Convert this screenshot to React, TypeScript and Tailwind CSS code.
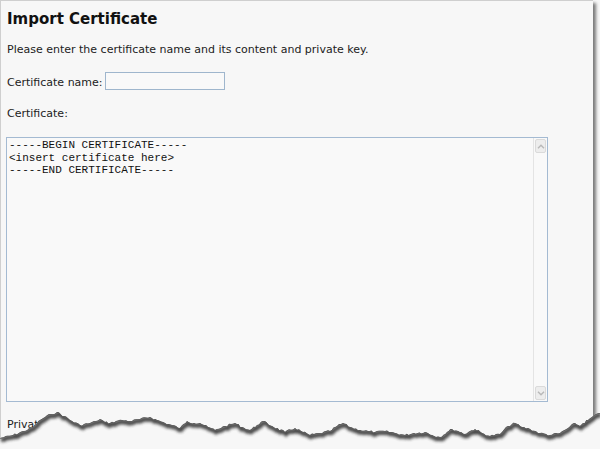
import React from 'react';

// rough outline of the torn bottom edge, absolute page coords
const tearProfile: [number, number][] = [
  [0, 438], [13, 435], [24, 431], [33, 427], [40, 420], [45, 417], [51, 414], [57, 412],
  [64, 416], [72, 421], [80, 425], [90, 423], [96, 421], [100, 419], [105, 422], [110, 423],
  [116, 421], [122, 420], [130, 421], [140, 419], [150, 417], [157, 420], [165, 423],
  [172, 425], [180, 428], [187, 421], [194, 423], [200, 423], [208, 427], [215, 430],
  [225, 426], [235, 423], [242, 427], [250, 430], [257, 425], [263, 421], [272, 426],
  [285, 432], [295, 428], [303, 432], [310, 435], [320, 433], [330, 431], [337, 426],
  [343, 423], [350, 427], [360, 430], [368, 431], [375, 432], [385, 431], [395, 433],
  [405, 435], [414, 433], [425, 432], [432, 435], [440, 437], [447, 432], [452, 429],
  [458, 431], [465, 434], [470, 431], [475, 429], [482, 433], [490, 436], [500, 434],
  [508, 426], [515, 423], [522, 427], [530, 429], [540, 433], [550, 435], [560, 433],
  [568, 428], [575, 423], [580, 426], [583, 423], [588, 420], [592, 417], [596, 414], [600, 413],
];

function buildTear(offsetY: number) {
  let seed = 7;
  const rand = () => {
    seed = (seed * 9301 + 49297) % 233280;
    return seed / 233280;
  };
  const pts: string[] = [];
  for (let i = 0; i < tearProfile.length - 1; i++) {
    const [x1, y1] = tearProfile[i];
    const [x2, y2] = tearProfile[i + 1];
    const steps = Math.max(1, Math.round((x2 - x1) / 2));
    for (let s = 0; s < steps; s++) {
      const t = s / steps;
      const x = x1 + (x2 - x1) * t;
      const jitter = s === 0 ? 0 : (rand() - 0.5) * 2.2;
      pts.push(`${x.toFixed(1)},${(y1 + (y2 - y1) * t + jitter - offsetY).toFixed(1)}`);
    }
  }
  const [lx, ly] = tearProfile[tearProfile.length - 1];
  pts.push(`${lx},${ly - offsetY}`);
  return pts;
}

function TornEdge() {
  const top = 404;
  const pts = buildTear(top);
  const line = 'M' + pts.join(' L');
  const area = line + ' L600,45 L0,45 Z';
  return (
    <svg className="absolute left-0 bottom-0" width="600" height="45" viewBox="0 0 600 45">
      <defs>
        <clipPath id="below">
          <path d={area} />
        </clipPath>
        <filter id="soft" x="-5%" y="-50%" width="110%" height="200%">
          <feGaussianBlur stdDeviation="1.4" />
        </filter>
      </defs>
      <path d={area} fill="#f7f7f7" />
      <g clipPath="url(#below)">
        <path d={line} transform="translate(1,2)" fill="none" stroke="#333" strokeWidth="4.5" filter="url(#soft)" opacity="0.9" />
        <path d={line} fill="none" stroke="#5a5a5a" strokeWidth="1.6" />
      </g>
    </svg>
  );
}

function ScrollButton({ dir }: { dir: 'up' | 'down' }) {
  return (
    <div className="h-[14px] flex items-center justify-center bg-[#ededed] border border-[#dadada] rounded-[2px]">
      <svg width="8" height="5" viewBox="0 0 8 5">
        <path d={dir === 'up' ? 'M1 4.2 L4 1.2 L7 4.2' : 'M1 0.8 L4 3.8 L7 0.8'} fill="none" stroke="#b8b8b8" strokeWidth="1.4" />
      </svg>
    </div>
  );
}

export default function App() {
  const certText = '-----BEGIN CERTIFICATE-----\n<insert certificate here>\n-----END CERTIFICATE-----';

  return (
    <div className="relative w-[600px] h-[449px] overflow-hidden bg-[#f7f7f7]">
      <div
        className="w-[593px] h-[449px] bg-[#f7f7f7] border-l border-t border-[#cfcfcf] shadow-[3px_3px_3px_rgba(0,0,0,0.5)] pl-[5px] pt-[9px] text-[#222]"
        style={{ fontFamily: '"DejaVu Sans", Verdana, sans-serif' }}
      >
        <h1 className="text-[15px] leading-[18px] font-bold text-[#111] pl-px">Import Certificate</h1>

        <p className="mt-[15px] text-[11px] leading-[13px] pl-px">
          Please enter the certificate name and its content and private key.
        </p>

        <div className="mt-[16px] flex items-center pl-px">
          <label className="text-[11px] leading-[13px] mt-[2px]">Certificate name:</label>
          <input
            type="text"
            className="ml-[2px] w-[120px] h-[18px] bg-[#f9f9f9] border border-[#9fb6cd] outline-none"
          />
        </div>

        <div className="mt-[17px] text-[11px] leading-[13px] pl-px">Certificate:</div>

        <div className="mt-[17px] w-[542px] h-[265px] flex border border-[#a4bad2] bg-[#f9f9f9]">
          <textarea
            readOnly
            value={certText}
            className="flex-1 resize-none bg-transparent outline-none overflow-hidden pl-[2px] pt-[1px] text-[11px] leading-[12.5px] text-[#111]"
            style={{ fontFamily: '"Liberation Mono", "Courier New", monospace' }}
          />
          <div className="w-[14px] flex flex-col border-l border-[#e4e4e4] p-px">
            <ScrollButton dir="up" />
            <div className="flex-1" />
            <ScrollButton dir="down" />
          </div>
        </div>

        <div className="mt-[16px] text-[11px] leading-[13px] pl-px">Private key:</div>
      </div>

      <TornEdge />
    </div>
  );
}
